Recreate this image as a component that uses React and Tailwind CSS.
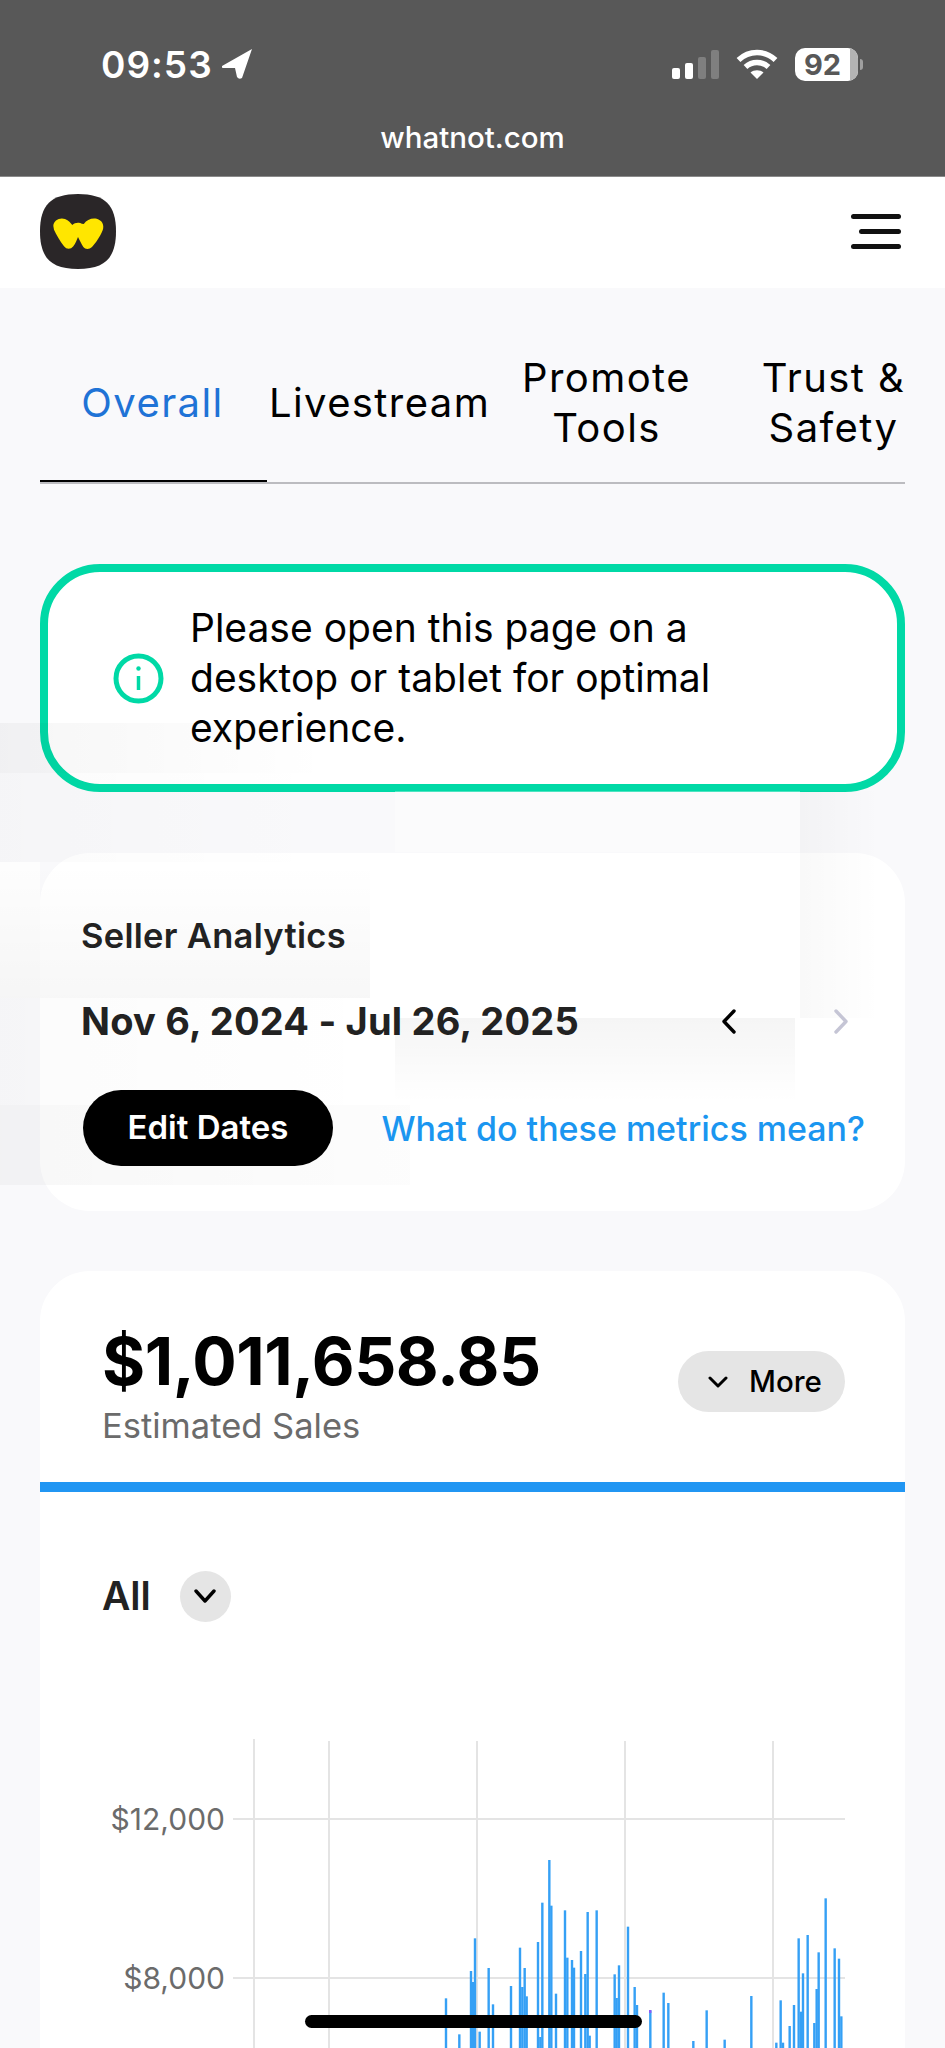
const BARS = [
  [138, 532], [178, 640], [213, 450], [219, 483], [225, 352], [239, 632], [266, 441], [279, 550],
  [333, 495], [360, 380], [367, 498], [374, 441], [380, 526], [414, 363], [421, 648], [427, 245],
  [448, 117], [454, 254], [468, 518], [495, 268], [502, 410], [516, 417], [522, 440], [543, 390],
  [556, 459], [563, 273], [569, 644], [590, 268], [644, 460], [650, 531], [657, 433], [684, 317],
  [704, 498], [711, 552], [751, 568], [791, 515], [805, 546], [880, 660], [920, 568], [974, 656],
  [1054, 525], [1129, 665], [1142, 538], [1149, 665], [1169, 615], [1182, 552], [1196, 352],
  [1203, 572], [1209, 457], [1223, 342], [1243, 606], [1250, 504], [1256, 394], [1277, 232],
  [1304, 382], [1317, 413], [1324, 586],
]

function StatusBar() {
  return (
    <div className="h-[177px] bg-[#585858] border-b border-[#8a8a8a] text-white font-['Inter',sans-serif]">
      <div className="flex justify-between items-center h-[122px] pl-[101px] pr-[82px] pt-[6px]">
        <div className="flex items-center gap-[9px]">
          <span className="text-[37px] leading-none font-semibold tracking-[1px]">09:53</span>
          <svg width="30" height="30" viewBox="0 0 30 30">
            <path d="M30 0 L0 17 Q-1 19 2 19 L13 19 L15 28 Q17 31 20 29 Z" fill="white" />
          </svg>
        </div>
        <div className="flex items-center gap-[17px]">
          <div className="flex items-end gap-[5px] h-[29px]">
            <div className="w-[8px] h-[11px] rounded-[2px] bg-white" />
            <div className="w-[8px] h-[16px] rounded-[2px] bg-white" />
            <div className="w-[8px] h-[22px] rounded-[2px] bg-[#7f7f7f]" />
            <div className="w-[8px] h-[29px] rounded-[2px] bg-[#7f7f7f]" />
          </div>
          <svg width="42" height="30" viewBox="0 0 42 30" fill="none" stroke="white" strokeWidth="5.5">
            <path d="M2.5 11 C13 1 29 1 39.5 11" />
            <path d="M9.5 18 C16 12 26 12 32.5 18" />
            <path d="M21 30 L14.5 23.5 C18 20.5 24 20.5 27.5 23.5 Z" fill="white" stroke="none" />
          </svg>
          <div className="flex items-center gap-[2px]">
            <div className="w-[63px] h-[33px] rounded-[10px] overflow-hidden flex bg-white">
              <div className="w-[55px] flex items-center justify-center text-[#585858] text-[29px] font-bold leading-none">92</div>
              <div className="w-[8px] bg-[#b4b4b4]" />
            </div>
            <div className="w-[3px] h-[11px] rounded-r-[3px] bg-[#a0a0a0]" />
          </div>
        </div>
      </div>
      <div className="text-center text-[29.5px] leading-[30px] font-medium">whatnot.com</div>
    </div>
  )
}

function Header() {
  return (
    <div className="h-[111px] bg-white flex items-center justify-between pl-[40px] pr-[44px] pb-[2px]">
      <svg width="76" height="75" viewBox="60 39 228 225">
        <path d="M174 39 C255 39 288 72 288 151 C288 231 255 264 174 264 C93 264 60 231 60 151 C60 72 93 39 174 39 Z" fill="#2a2628" />
        <path
          d="M100 135 C100 118 120 108 135 114 C146 118 152 126 157 132 C163 126 172 124 180 126 C186 128 188 130 192 128 C200 116 215 110 230 113 C246 117 254 132 248 148 C240 168 226 188 216 198 C208 206 196 206 190 198 C184 188 178 176 174 168 C170 178 166 188 160 196 C152 206 140 206 132 196 C120 180 108 160 102 146 Z"
          fill="#ffe600"
        />
      </svg>
      <div className="flex flex-col items-end gap-[10px]">
        <div className="w-[50px] h-[5px] rounded-full bg-[#111]" />
        <div className="w-[42px] h-[5px] rounded-full bg-[#111]" />
        <div className="w-[50px] h-[5px] rounded-full bg-[#111]" />
      </div>
    </div>
  )
}

function Tabs() {
  const tabs = ['Overall', 'Livestream', 'Promote Tools', 'Trust & Safety']
  return (
    <div className="mx-[40px] h-[196px] pt-[36px] overflow-hidden border-b-2 border-[#bcbcc0] relative">
      <div className="flex w-[908px] h-full -ml-[1px] font-['Inter',sans-serif] text-[40px] leading-[50px] tracking-[1.4px] text-black">
        {tabs.map((t, i) => (
          <div key={t} className={`w-[227px] shrink-0 flex items-center justify-center text-center px-[20px] ${i === 0 ? 'text-[#1f73d6]' : ''}`}>
            {t}
          </div>
        ))}
      </div>
      <div className="absolute left-0 bottom-0 w-[227px] h-[2px] bg-black" />
    </div>
  )
}

function Alert() {
  return (
    <div className="mx-[40px] mt-[80px] h-[228px] rounded-[60px] border-[8px] border-[#00d9a6] bg-white flex items-center pl-[65px] gap-[26px] font-['Inter',sans-serif]">
      <svg width="51" height="51" viewBox="0 0 51 51" className="shrink-0 relative z-10" fill="none" stroke="#00d9a6">
        <circle cx="25.5" cy="25.5" r="22.5" strokeWidth="5" />
        <path d="M25.5 23 V37" strokeWidth="3.5" />
        <circle cx="25.5" cy="15.5" r="2.2" fill="#00d9a6" stroke="none" />
      </svg>
      <p className="relative z-10 w-[560px] text-[39px] leading-[50px] text-black">
        Please open this page on a desktop or tablet for optimal experience.
      </p>
    </div>
  )
}

function SellerCard() {
  return (
    <div className="mx-[40px] mt-[61px] h-[358px] rounded-[50px] bg-white pl-[41px] pr-[42px] pt-[62px] font-['Inter',sans-serif]">
      <div className="relative z-10 text-[34.5px] leading-[42px] font-semibold tracking-[0.3px] text-[#222]">Seller Analytics</div>
      <div className="relative z-10 flex items-center justify-between mt-[44px] h-[40px]">
        <span className="text-[38px] leading-none font-bold text-[#222] tracking-[0.2px]">Nov 6, 2024 - Jul 26, 2025</span>
        <div className="flex items-center gap-[98px] pr-[14px]">
          <svg width="15" height="25" viewBox="0 0 15 25" fill="none" stroke="#000" strokeWidth="3.4" strokeLinecap="round" strokeLinejoin="round">
            <path d="M13 2 L3 12.5 L13 23" />
          </svg>
          <svg width="15" height="25" viewBox="0 0 15 25" fill="none" stroke="#c5c5d5" strokeWidth="3.4" strokeLinecap="round" strokeLinejoin="round">
            <path d="M2 2 L12 12.5 L2 23" />
          </svg>
        </div>
      </div>
      <div className="relative z-10 flex items-center justify-between mt-[49px]">
        <div className="w-[250px] h-[76px] ml-[2px] rounded-full bg-black text-white flex items-center justify-center text-[33px] font-semibold">Edit Dates</div>
        <span className="text-[34px] font-medium text-[#1a96f0] -mr-[2px]">What do these metrics mean?</span>
      </div>
    </div>
  )
}

function SalesChart() {
  return (
    <svg width="866" height="414" viewBox="40 1634 866 414" className="block">
      <g stroke="#e4e4e4" strokeWidth="2">
        <line x1="254" y1="1738" x2="254" y2="2048" />
        <line x1="329" y1="1740" x2="329" y2="2048" />
        <line x1="477" y1="1740" x2="477" y2="2048" />
        <line x1="625" y1="1740" x2="625" y2="2048" />
        <line x1="773" y1="1740" x2="773" y2="2048" />
        <line x1="233" y1="1818" x2="845" y2="1818" />
        <line x1="233" y1="1977" x2="845" y2="1977" />
      </g>
      {BARS.map(([x, y], i) => (
        <rect key={i} x={400 + x / 3 - 1.2} y={1820 + y / 3} width="2.4" height={2048 - 1820 - y / 3} fill="#35a0f5" />
      ))}
      <rect x="649" y="2009" width="2.4" height="3" fill="#8a5cf6" />
      <g fontFamily="Inter, sans-serif" fontSize="30" fill="#6b6b6b" textAnchor="end">
        <text x="225" y="1828.5">$12,000</text>
        <text x="225" y="1987.5">$8,000</text>
      </g>
    </svg>
  )
}

function SalesCard() {
  return (
    <div className="mx-[40px] mt-[60px] rounded-t-[50px] bg-white font-['Inter',sans-serif]">
      <div className="h-[211px] pl-[62px] pr-[60px] flex justify-between items-start">
        <div className="pt-[54px]">
          <div className="text-[66px] leading-[72px] font-bold text-black tracking-[-0.5px]">$1,011,658.85</div>
          <div className="text-[34.5px] leading-[42px] mt-[8px] text-[#6b6b6b]">Estimated Sales</div>
        </div>
        <div className="mt-[80px] w-[167px] h-[61px] rounded-full bg-[#e5e5e5] flex items-center justify-center gap-[21px] text-[29.5px] font-medium text-black pl-[7px]">
          <svg width="20" height="12" viewBox="0 0 20 12" fill="none" stroke="#000" strokeWidth="3" strokeLinecap="round" strokeLinejoin="round">
            <path d="M2 2 L10 10 L18 2" />
          </svg>
          More
        </div>
      </div>
      <div className="h-[10px] bg-[#2196f3]" />
      <div className="flex items-center gap-[29px] pl-[62px] h-[78px] mt-[65px]">
        <span className="text-[39px] font-semibold text-[#222]">All</span>
        <div className="w-[51px] h-[51px] rounded-full bg-[#e5e5e5] flex items-center justify-center">
          <svg width="22" height="14" viewBox="0 0 22 14" fill="none" stroke="#000" strokeWidth="3.4" strokeLinecap="round" strokeLinejoin="round">
            <path d="M2 2 L11 12 L20 2" />
          </svg>
        </div>
      </div>
      <SalesChart />
    </div>
  )
}

// faint smeared shadows baked into the screenshot
function Smears() {
  return (
    <div className="absolute inset-0 z-0 pointer-events-none">
      <div className="absolute left-0 top-[723px] w-[330px] h-[50px] bg-gradient-to-r from-black/[0.035] to-transparent" />
      <div className="absolute left-0 top-[773px] w-[335px] h-[89px] bg-gradient-to-r from-black/[0.015] to-transparent" />
      <div className="absolute left-[395px] top-[791px] w-[405px] h-[61px] bg-white/30" />
      <div className="absolute left-[800px] top-[791px] w-[80px] h-[227px] bg-gradient-to-r from-black/[0.025] to-transparent" />
      <div className="absolute left-0 top-[862px] w-[40px] h-[136px] bg-white/60" />
      <div className="absolute left-0 top-[862px] w-[370px] h-[136px] bg-gradient-to-b from-transparent to-black/[0.03]" />
      <div className="absolute left-[395px] top-[1018px] w-[400px] h-[85px] bg-gradient-to-b from-black/[0.04] to-transparent" />
      <div className="absolute left-0 top-[998px] w-[395px] h-[107px] bg-gradient-to-r from-black/[0.015] to-transparent" />
      <div className="absolute left-0 top-[1105px] w-[410px] h-[80px] bg-gradient-to-r from-black/[0.03] to-black/[0.01]" />
    </div>
  )
}

export default function App() {
  return (
    <div className="relative isolate w-[945px] h-[2048px] overflow-hidden bg-[#f9f9fb]">
      <StatusBar />
      <Header />
      <Tabs />
      <Alert />
      <SellerCard />
      <SalesCard />
      <Smears />
      <div className="absolute left-[305px] top-[2015px] w-[337px] h-[13px] rounded-full bg-black z-20" />
    </div>
  )
}
